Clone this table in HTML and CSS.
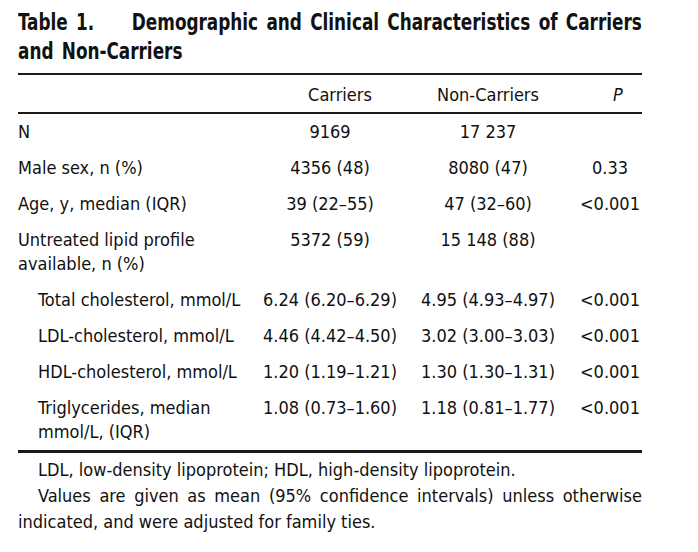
FILE: index.html
```html
<!DOCTYPE html>
<html>
<head>
<meta charset="utf-8">
<link rel="stylesheet" href="styles.css">
</head>
<body>
<div class="wrap">
  <h1 class="title"><span class="label">Table 1.</span> <span class="rest">Demographic and Clinical Characteristics of Carriers and Non-Carriers</span></h1>
  <table class="tbl">
    <colgroup>
      <col class="c1"><col class="c2"><col class="c3"><col class="c4">
    </colgroup>
    <thead>
      <tr><th></th><th class="h-car">Carriers</th><th>Non-Carriers</th><th class="h-p"><i>P</i></th></tr>
    </thead>
    <tbody>
      <tr><td>N</td><td>9169</td><td>17 237</td><td></td></tr>
      <tr><td>Male sex, n (%)</td><td>4356 (48)</td><td>8080 (47)</td><td>0.33</td></tr>
      <tr><td>Age, y, median (IQR)</td><td>39 (22–55)</td><td>47 (32–60)</td><td>&lt;0.001</td></tr>
      <tr><td>Untreated lipid profile<br>available, n (%)</td><td>5372 (59)</td><td>15 148 (88)</td><td></td></tr>
      <tr class="sub"><td>Total cholesterol, mmol/L</td><td>6.24 (6.20–6.29)</td><td>4.95 (4.93–4.97)</td><td>&lt;0.001</td></tr>
      <tr class="sub"><td>LDL-cholesterol, mmol/L</td><td>4.46 (4.42–4.50)</td><td>3.02 (3.00–3.03)</td><td>&lt;0.001</td></tr>
      <tr class="sub"><td>HDL-cholesterol, mmol/L</td><td>1.20 (1.19–1.21)</td><td>1.30 (1.30–1.31)</td><td>&lt;0.001</td></tr>
      <tr class="sub"><td>Triglycerides, median<br>mmol/L, (IQR)</td><td>1.08 (0.73–1.60)</td><td>1.18 (0.81–1.77)</td><td>&lt;0.001</td></tr>
    </tbody>
  </table>
  <div class="notes">
    <p class="ind">LDL, low-density lipoprotein; HDL, high-density lipoprotein.</p>
    <p class="ind spread">Values are given as mean (95% confidence intervals) unless otherwise</p>
    <p>indicated, and were adjusted for family ties.</p>
  </div>
</div>
</body>
</html>
```
FILE: styles.css
```css
html, body {
  margin: 0;
  padding: 0;
  background: #fff;
  overflow: hidden;
}
body {
  font-family: "DejaVu Sans Condensed", "Liberation Sans", sans-serif;
  color: #111;
}
.wrap {
  width: 624px;
  padding: 0 0 0 18px;
}
.title {
  margin: 0;
  padding-top: 8px;
  width: 790px;
  font-size: 23px;
  line-height: 29px;
  font-weight: bold;
  word-spacing: 3px;
  transform: scaleX(0.815);
  transform-origin: 0 0;
}
.title .label {
  margin-right: 36px;
}
.tbl {
  margin-top: 7px;
  width: 624px;
  table-layout: fixed;
  border-collapse: collapse;
  font-size: 18px;
}
.c1 { width: 244px; }
.c2 { width: 136px; }
.c3 { width: 180px; }
.c4 { width: 64px; }
.tbl thead tr {
  border-top: 2px solid #1a1a1a;
  border-bottom: 2px solid #1a1a1a;
}
.tbl th {
  font-weight: normal;
  text-align: center;
  line-height: 24px;
  padding: 8px 0 5px;
  white-space: nowrap;
}
.tbl th.h-car {
  padding-left: 20px;
}
.tbl th.h-p {
  padding-left: 16px;
}
.tbl tbody tr:last-child {
  border-bottom: 3px solid #1a1a1a;
}
.tbl td {
  padding: 6px 0;
  line-height: 24px;
  vertical-align: top;
  text-align: center;
  white-space: nowrap;
}
.tbl td:first-child {
  text-align: left;
}
.tbl tr.sub td:first-child {
  padding-left: 20px;
}
.notes {
  font-size: 18px;
  line-height: 26px;
  padding-top: 4px;
}
.notes p {
  margin: 0;
}
.ind {
  text-indent: 20px;
}
.spread {
  text-align: justify;
  text-align-last: justify;
}
```
